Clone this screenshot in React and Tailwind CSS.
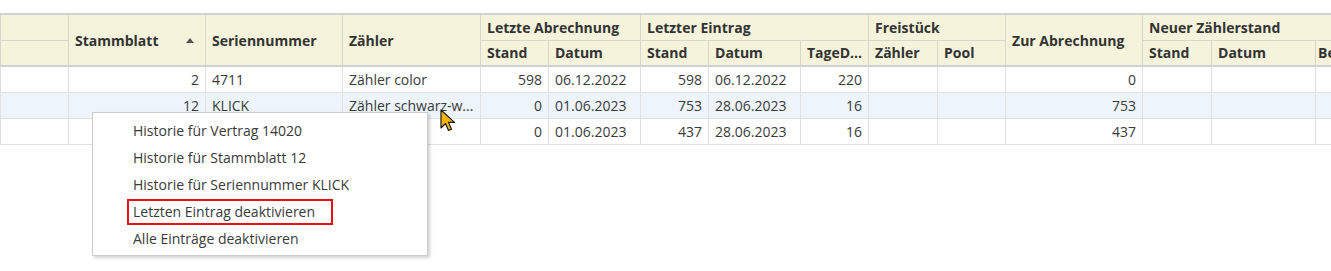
import React from "react";

const cols = [68, 137, 137, 138, 68, 92, 68, 92, 68, 69, 68, 137, 69, 104, 100];

const rows = [
  { sb: "2", sn: "4711", z: "Zähler color", las: "598", lad: "06.12.2022", les: "598", led: "06.12.2022", tage: "220", zur: "0", sel: false },
  { sb: "12", sn: "KLICK", z: "Zähler schwarz-w...", las: "0", lad: "01.06.2023", les: "753", led: "28.06.2023", tage: "16", zur: "753", sel: true },
  { sb: "", sn: "", z: "", las: "0", lad: "01.06.2023", les: "437", led: "28.06.2023", tage: "16", zur: "437", sel: false },
];

const th = "border border-[#d6d6cf] px-[6px] text-left font-bold text-[#333333] whitespace-nowrap overflow-hidden";
const td = "border border-[#e1e1e1] px-[6px] whitespace-nowrap overflow-hidden";

export default function App() {
  return (
    <div
      className="relative w-[1331px] h-[271px] overflow-hidden bg-white pt-[13px] text-[14px] text-[#3a3a3a]"
      style={{ fontFamily: '"Open Sans", "Noto Sans", sans-serif' }}
    >
      <table className="table-fixed border-collapse w-[1415px] border-t-2 border-t-[#d2d2d2]">
        <colgroup>
          {cols.map((w, i) => (
            <col key={i} style={{ width: w }} />
          ))}
        </colgroup>
        <thead className="bg-[#f5f3dc]">
          <tr className="h-[26px]">
            <th className={th}></th>
            <th rowSpan={2} className={th}>
              <div className="flex items-center justify-between pr-[5px]">
                <span>Stammblatt</span>
                <svg width="8" height="5" viewBox="0 0 8 5"><path d="M0 5 L4 0 L8 5 Z" fill="#555" /></svg>
              </div>
            </th>
            <th rowSpan={2} className={th}>Seriennummer</th>
            <th rowSpan={2} className={th}>Zähler</th>
            <th colSpan={2} className={th}>Letzte Abrechnung</th>
            <th colSpan={3} className={th}>Letzter Eintrag</th>
            <th colSpan={2} className={th}>Freistück</th>
            <th rowSpan={2} className={th}>Zur Abrechnung</th>
            <th colSpan={3} className={th}>Neuer Zählerstand</th>
          </tr>
          <tr className="h-[26px] border-b-2 border-b-[#d2d2d2]">
            <th className={th}></th>
            <th className={th}>Stand</th>
            <th className={th}>Datum</th>
            <th className={th}>Stand</th>
            <th className={th}>Datum</th>
            <th className={th}>TageD...</th>
            <th className={th}>Zähler</th>
            <th className={th}>Pool</th>
            <th className={th}>Stand</th>
            <th className={th}>Datum</th>
            <th className="border border-[#d6d6cf] pl-[2px] text-left font-bold text-[#333333] whitespace-nowrap overflow-hidden">Bemerkung</th>
          </tr>
        </thead>
        <tbody>
          {rows.map((r, i) => (
            <tr key={i} className={`h-[26px] ${r.sel ? "bg-[#edf4fb]" : "bg-white"}`}>
              <td className={td}></td>
              <td className={`${td} text-right`}>{r.sb}</td>
              <td className={td}>{r.sn}</td>
              <td className={td}>{r.z}</td>
              <td className={`${td} text-right`}>{r.las}</td>
              <td className={td}>{r.lad}</td>
              <td className={`${td} text-right`}>{r.les}</td>
              <td className={td}>{r.led}</td>
              <td className={`${td} text-right`}>{r.tage}</td>
              <td className={td}></td>
              <td className={td}></td>
              <td className={`${td} text-right`}>{r.zur}</td>
              <td className={td}></td>
              <td className={td}></td>
              <td className={td}></td>
            </tr>
          ))}
        </tbody>
      </table>

      {/* context menu */}
      <div className="absolute left-[92px] top-[112px] w-[336px] h-[144px] bg-white border border-[#cccccc] shadow-[2px_2px_3px_rgba(0,0,0,0.18)] py-[4px] text-[#3a3a3a]">
        <div className="h-[27px] flex items-center pl-[40px]">Historie für Vertrag 14020</div>
        <div className="h-[27px] flex items-center pl-[40px]">Historie für Stammblatt 12</div>
        <div className="h-[27px] flex items-center pl-[40px]">Historie für Seriennummer KLICK</div>
        <div className="h-[27px] flex items-center pl-[34px]">
          <span className="h-[26px] flex items-center border-2 border-[#e8101a] pl-[4px] pr-[16px]">Letzten Eintrag deaktivieren</span>
        </div>
        <div className="h-[27px] flex items-center pl-[40px]">Alle Einträge deaktivieren</div>
      </div>

      {/* mouse cursor */}
      <svg className="absolute left-[440px] top-[109px]" width="16" height="24" viewBox="0 0 16 24">
        <path d="M1 1 L1 19 L5.5 14.5 L8.5 21.5 L11.5 20.2 L8.6 13.4 L14.5 13.4 Z" fill="#f1b400" stroke="#1a1a1a" strokeWidth="1.2" strokeLinejoin="round" />
      </svg>
    </div>
  );
}
